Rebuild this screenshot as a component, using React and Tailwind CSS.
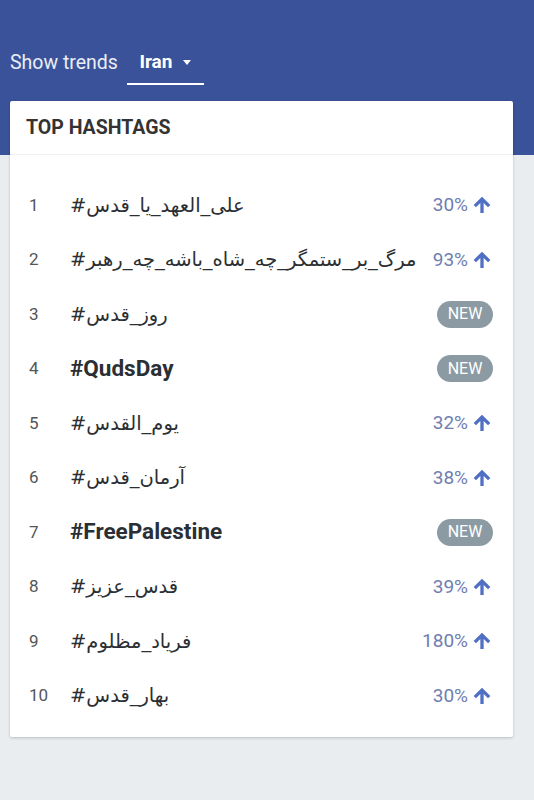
import React from "react";

const rows = [
  { n: 1, tag: "#علی_العهد_یا_قدس", pct: "30%" },
  { n: 2, tag: "#مرگ_بر_ستمگر_چه_شاه_باشه_چه_رهبر", pct: "93%" },
  { n: 3, tag: "#روز_قدس", isNew: true },
  { n: 4, tag: "#QudsDay", isNew: true, latin: true },
  { n: 5, tag: "#یوم_القدس", pct: "32%" },
  { n: 6, tag: "#آرمان_قدس", pct: "38%" },
  { n: 7, tag: "#FreePalestine", isNew: true, latin: true },
  { n: 8, tag: "#قدس_عزیز", pct: "39%" },
  { n: 9, tag: "#فریاد_مظلوم", pct: "180%" },
  { n: 10, tag: "#بهار_قدس", pct: "30%" },
];

function ArrowUp() {
  return (
    <svg width="22" height="22" viewBox="0 0 24 24" className="fill-[#4f6fc4]">
      <path d="M4 12l1.41 1.41L11 7.83V20h2V7.83l5.58 5.59L20 12l-8-8-8 8z" stroke="#4f6fc4" strokeWidth="1.6" />
    </svg>
  );
}

export default function App() {
  return (
    <div className="min-h-[800px] bg-[#e9edf0] font-['Roboto','DejaVu_Sans',sans-serif]">
      <div className="h-[155px] bg-[#3a5299] px-[10px] pt-[49px]">
        <div className="flex items-start">
          <span className="text-[19.5px] text-white/90 leading-[28px]">Show trends</span>
          <div className="ml-[9px] w-[77px] border-b-2 border-white pb-[8px] flex items-center justify-center gap-[11px]">
            <span className="text-[19px] font-bold text-white leading-[26px]">Iran</span>
            <span className="w-0 h-0 border-l-[4px] border-r-[4px] border-t-[5px] border-l-transparent border-r-transparent border-t-white" />
          </div>
        </div>
      </div>
      <div className="-mt-[54px] ml-[10px] mr-[21px] bg-white rounded-[2px] shadow-[0_1px_3px_rgba(0,0,0,0.2)]">
        <div className="h-[54px] flex items-center px-[16px] border-b border-[#eef0f2]">
          <span className="text-[19.5px] font-bold text-[#333]">TOP HASHTAGS</span>
        </div>
        <div className="pt-[23px] pb-[14px]">
          {rows.map((r) => (
            <div key={r.n} className="h-[54.5px] flex items-center pl-[19px] pr-[20px]">
              <span className="w-[41px] text-[17px] text-[#555]">{r.n}</span>
              <span
                className={
                  r.latin
                    ? "flex-1 text-[22.5px] font-bold text-[#2b2f33]"
                    : "flex-1 text-[19.5px] text-[#2b2f33] font-['DejaVu_Sans',sans-serif]"
                }
                dir="ltr"
              >
                {r.tag}
              </span>
              {r.isNew ? (
                <span className="h-[27px] w-[56px] rounded-full bg-[#8c9ba3] text-white text-[16px] flex items-center justify-center">
                  NEW
                </span>
              ) : (
                <span className="flex items-center gap-[3px]">
                  <span className="text-[19px] text-[#6f7eb0]">{r.pct}</span>
                  <ArrowUp />
                </span>
              )}
            </div>
          ))}
        </div>
      </div>
    </div>
  );
}
